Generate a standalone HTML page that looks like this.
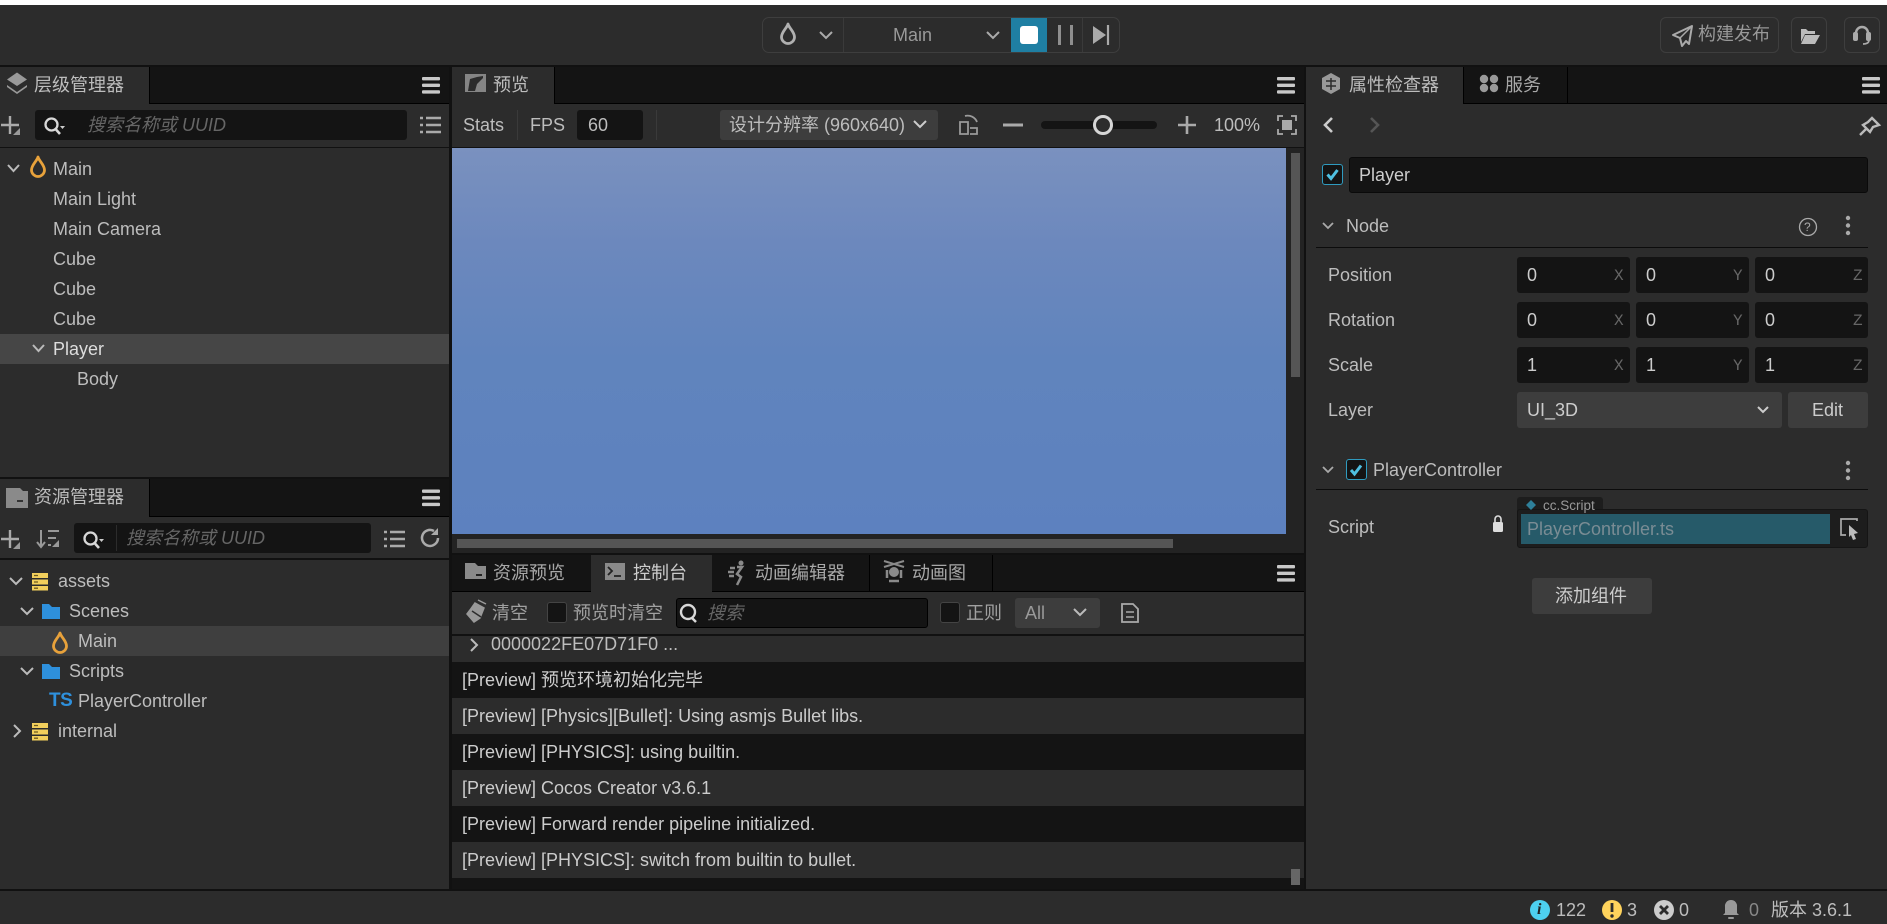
<!DOCTYPE html>
<html><head><meta charset="utf-8"><title>Cocos Creator</title>
<style>
html,body{margin:0;padding:0;background:#2c2c2c;}
#a{position:relative;width:1887px;height:924px;overflow:hidden;background:#2c2c2c;font-family:"Liberation Sans","Noto Sans CJK SC",sans-serif;font-size:18px;color:#bdbdbd;}
.b{position:absolute;box-sizing:border-box;}
.t{position:absolute;white-space:nowrap;line-height:30px;height:30px;}
.d{background:#141414;}
.i{background:#141414;border-radius:3px;}
.p{font-style:italic;color:#666;}
.ax{font-family:"Liberation Mono","DejaVu Sans Mono",monospace;font-size:16px;color:#666;}
svg{position:absolute;left:0;top:0;}
</style></head><body><div id="a">
<!-- top white -->
<div class="b" style="left:0;top:0;width:1887px;height:5px;background:#fff"></div>
<!-- panel frame lines -->
<div class="b" style="left:0;top:65px;width:1887px;height:2px;background:#111"></div>
<div class="b" style="left:449px;top:66px;width:3px;height:825px;background:#111"></div>
<div class="b" style="left:1304px;top:66px;width:2px;height:825px;background:#111"></div>
<div class="b" style="left:0;top:889px;width:1887px;height:2px;background:#111"></div>
<!-- left tabs -->
<div class="b d" style="left:149px;top:67px;width:300px;height:37px;border-left:1px solid #000;border-bottom:1px solid #000"></div>
<div class="b" style="left:0;top:147px;width:449px;height:1px;background:#111"></div>
<div class="b" style="left:0;top:477px;width:449px;height:2px;background:#111"></div>
<div class="b d" style="left:149px;top:479px;width:300px;height:38px;border-left:1px solid #000;border-bottom:1px solid #000"></div>
<div class="b" style="left:0;top:558px;width:449px;height:2px;background:#111"></div>
<div class="b" style="left:0;top:334px;width:449px;height:30px;background:#464646"></div>
<div class="b" style="left:0;top:626px;width:449px;height:30px;background:#3f3f3f"></div>
<div class="b i" style="left:35px;top:110px;width:372px;height:30px"></div>
<div class="b i" style="left:74px;top:523px;width:297px;height:30px"></div>
<div class="b" style="left:116px;top:525px;width:1px;height:26px;background:#2c2c2c"></div>
<!-- middle -->
<div class="b d" style="left:554px;top:67px;width:750px;height:37px;border-left:1px solid #000;border-bottom:1px solid #000"></div>
<div class="b" style="left:452px;top:147px;width:852px;height:1px;background:#111"></div>
<div class="b" style="left:517px;top:110px;width:1px;height:30px;background:#3a3a3a"></div>
<div class="b" style="left:656px;top:110px;width:1px;height:30px;background:#3a3a3a"></div>
<div class="b i" style="left:577px;top:110px;width:66px;height:30px"></div>
<div class="b" style="left:720px;top:110px;width:218px;height:30px;background:#3d3d3d;border-radius:3px"></div>
<div class="b" style="left:1041px;top:121px;width:116px;height:8px;background:#141414;border-radius:4px"></div>
<div class="b" style="left:1093px;top:115px;width:20px;height:20px;border:3px solid #d6d6d6;border-radius:50%;background:#2c2c2c"></div>
<div class="b" style="left:452px;top:148px;width:852px;height:405px;background:#232323"></div>
<div class="b" style="left:452px;top:148px;width:834px;height:386px;background:linear-gradient(180deg,#7a91bf 0%,#6c88bd 25%,#6084bd 55%,#5d81bf 100%)"></div>
<div class="b" style="left:1291px;top:153px;width:9px;height:224px;background:#555;"></div>
<div class="b" style="left:457px;top:539px;width:716px;height:9px;background:#555;"></div>
<div class="b" style="left:450px;top:553px;width:854px;height:2px;background:#111"></div>
<div class="b d" style="left:452px;top:555px;width:852px;height:37px;border-bottom:1px solid #000"></div>
<div class="b" style="left:591px;top:555px;width:121px;height:38px;background:#2c2c2c"></div>
<div class="b" style="left:869px;top:555px;width:1px;height:37px;background:#000"></div>
<div class="b" style="left:992px;top:555px;width:1px;height:37px;background:#000"></div>
<div class="b" style="left:452px;top:634px;width:852px;height:2px;background:#111"></div>
<div class="b" style="left:547px;top:602px;width:20px;height:21px;background:#141414;border:1px solid #444;border-radius:3px"></div>
<div class="b i" style="left:676px;top:598px;width:252px;height:30px;border:1px solid #000"></div>
<div class="b" style="left:940px;top:602px;width:20px;height:21px;background:#141414;border:1px solid #444;border-radius:3px"></div>
<div class="b" style="left:1015px;top:598px;width:85px;height:30px;background:#3d3d3d;border-radius:3px"></div>
<!-- console rows -->
<div class="b d" style="left:452px;top:662px;width:852px;height:36px"></div>
<div class="b d" style="left:452px;top:734px;width:852px;height:36px"></div>
<div class="b d" style="left:452px;top:806px;width:852px;height:36px"></div>
<div class="b d" style="left:452px;top:878px;width:852px;height:11px"></div>
<div class="b" style="left:1291px;top:869px;width:9px;height:16px;background:#666"></div>
<!-- right -->
<div class="b d" style="left:1463px;top:67px;width:424px;height:37px;border-left:1px solid #000;border-bottom:1px solid #000"></div>
<div class="b" style="left:1567px;top:67px;width:1px;height:37px;background:#000"></div>
<div class="b i" style="left:1349px;top:157px;width:519px;height:36px;border:1px solid #0a0a0a"></div>
<div class="b" style="left:1322px;top:164px;width:21px;height:21px;background:#141414;border:1px solid #2f9bbf;border-radius:3px"></div>
<div class="b" style="left:1316px;top:247px;width:552px;height:1px;background:#0c0c0c"></div>
<div class="b i" style="left:1517px;top:257px;width:113px;height:36px"></div><div class="b i" style="left:1636px;top:257px;width:113px;height:36px"></div><div class="b i" style="left:1755px;top:257px;width:113px;height:36px"></div>
<div class="b i" style="left:1517px;top:302px;width:113px;height:36px"></div><div class="b i" style="left:1636px;top:302px;width:113px;height:36px"></div><div class="b i" style="left:1755px;top:302px;width:113px;height:36px"></div>
<div class="b i" style="left:1517px;top:347px;width:113px;height:36px"></div><div class="b i" style="left:1636px;top:347px;width:113px;height:36px"></div><div class="b i" style="left:1755px;top:347px;width:113px;height:36px"></div>
<div class="b" style="left:1517px;top:392px;width:265px;height:36px;background:#3d3d3d;border-radius:3px"></div>
<div class="b" style="left:1788px;top:392px;width:80px;height:36px;background:#3d3d3d;border-radius:3px"></div>
<div class="b" style="left:1346px;top:459px;width:21px;height:21px;background:#141414;border:1px solid #2f9bbf;border-radius:3px"></div>
<div class="b" style="left:1316px;top:489px;width:552px;height:1px;background:#0c0c0c"></div>
<div class="b" style="left:1517px;top:497px;width:86px;height:20px;background:#1d1d1d;border-radius:3px 3px 0 0"></div>
<div class="b" style="left:1517px;top:509px;width:351px;height:39px;background:#1d1d1d;border-radius:3px;border:1px solid #151515"></div>
<div class="b" style="left:1521px;top:514px;width:309px;height:30px;background:#265a69"></div>
<div class="b" style="left:1532px;top:578px;width:120px;height:36px;background:#3d3d3d;border-radius:3px"></div>
<!-- top buttons -->
<div class="b" style="left:762px;top:17px;width:358px;height:36px;border:1px solid #3e3e3e;border-radius:7px"></div>
<div class="b" style="left:843px;top:18px;width:1px;height:34px;background:#3a3a3a"></div>
<div class="b" style="left:1011px;top:18px;width:36px;height:34px;background:#1f7fa3"></div>
<div class="b" style="left:1020px;top:26px;width:18px;height:18px;background:#fff;border-radius:3px"></div>
<div class="b" style="left:1082px;top:18px;width:1px;height:34px;background:#3a3a3a"></div>
<div class="b" style="left:1660px;top:17px;width:119px;height:36px;border:1px solid #3e3e3e;border-radius:6px"></div>
<div class="b" style="left:1791px;top:17px;width:36px;height:36px;border:1px solid #3e3e3e;border-radius:6px"></div>
<div class="b" style="left:1844px;top:17px;width:36px;height:36px;border:1px solid #3e3e3e;border-radius:6px"></div>

<svg width="1887" height="924" viewBox="0 0 1887 924" fill="none">
<defs>
<g id="h"><rect x="0" y="0" width="18" height="3.4" rx="1" fill="#c8c8c8"/><rect x="0" y="6.6" width="18" height="3.4" rx="1" fill="#c8c8c8"/><rect x="0" y="13.2" width="18" height="3.4" rx="1" fill="#c8c8c8"/></g>
<g id="fl"><path d="M0 -11 C1 -7 6.500 -3 6.500 2 C6.500 6 3 8.500 0 8.500 C-3 8.500 -6.500 6 -6.500 2 C-6.500 -3 -1 -7 0 -11 Z" stroke-width="2.800" stroke-linejoin="round"/></g>
<g id="plus"><path d="M9 0V18M0 9H18" stroke="#aaa" stroke-width="2.400"/><path d="M19 12V19H12Z" fill="#999"/></g>
<g id="q"><circle cx="7.500" cy="7.500" r="6" stroke="#d8d8d8" stroke-width="2.300"/><path d="M11.500 12L16 17" stroke="#d8d8d8" stroke-width="2.600"/></g>
<g id="ls"><path d="M6 1H21M6 8H21M6 15H21" stroke="#aaa" stroke-width="2.500"/><path d="M0 1H3M0 8H3M0 15H3" stroke="#aaa" stroke-width="2.500"/></g>
<g id="db"><path d="M0 0H16V5H0ZM0 6.500H16V11.500H0ZM0 13H16V17.500H0Z" fill="#f2cf5c"/><path d="M2 2.500H6M2 9H6M2 15.200H6" stroke="#6b5a20" stroke-width="1.300"/></g>
<g id="fo"><path d="M0 0H7L10 3H18V15H0Z" fill="#2e90dc"/></g>
<g id="ck"><path d="M-5 0L-1.500 4L5 -4.500" stroke="#4fbfe0" stroke-width="3"/></g>
<g id="dots"><circle cx="0" cy="0" r="2.200" fill="#aaa"/><circle cx="0" cy="7.500" r="2.200" fill="#aaa"/><circle cx="0" cy="15" r="2.200" fill="#aaa"/></g>
</defs>
<!-- hamburgers -->
<use href="#h" x="422" y="77"/><use href="#h" x="422" y="489.500"/>
<use href="#h" x="1277" y="77"/><use href="#h" x="1277" y="565"/><use href="#h" x="1862" y="77"/>
<!-- layers icon -->
<path d="M17 72.500L27 79.500L17 86L7 79.500Z" fill="#999"/><path d="M7 85L17 92L27 85L27 87L17 94L7 87Z" fill="#999"/>
<use href="#plus" x="1" y="116"/>
<use href="#q" x="44" y="117"/><path d="M60 126H65L62.500 129Z" fill="#ccc"/>
<use href="#ls" x="420" y="117"/>
<!-- hierarchy tree -->
<path d="M8 165L13.500 171L19 165" stroke="#bbb" stroke-width="2"/>
<use href="#fl" x="38" y="168" stroke="#e8a23b"/>
<path d="M33 345L38.500 351L44 345" stroke="#bbb" stroke-width="2"/>
<!-- asset panel -->
<path d="M6 488H20L23 491H28V508H6Z" fill="#8a8a8a"/><path d="M17 501H23" stroke="#333" stroke-width="2"/>
<use href="#plus" x="1" y="530"/>
<path d="M41 530V547M37 542L41 547L45 542M48 531H59M48 538H56M48 545H51" stroke="#999" stroke-width="2"/><path d="M59 540V547H52Z" fill="#999"/>
<use href="#q" x="83" y="531"/><path d="M99 539H104L101.500 542Z" fill="#ccc"/>
<use href="#ls" x="384" y="531"/>
<path d="M438 538A8 8 0 1 1 434 531" stroke="#aaa" stroke-width="2.500"/><path d="M438 528V535H431Z" fill="#aaa"/>
<path d="M10 578L16 584L22 578" stroke="#bbb" stroke-width="2"/><use href="#db" x="32" y="573"/>
<path d="M21 608L27 614L33 608" stroke="#bbb" stroke-width="2"/><use href="#fo" x="42" y="604"/>
<use href="#fl" x="60" y="644" stroke="#e8a23b"/>
<path d="M21 668L27 674L33 668" stroke="#bbb" stroke-width="2"/><use href="#fo" x="42" y="664"/>
<path d="M14 725L20 731L14 737" stroke="#bbb" stroke-width="2"/><use href="#db" x="32" y="723"/>
<!-- top toolbar -->
<use href="#fl" x="788" y="35" stroke="#b0b0b0"/>
<path d="M820 32L826 38L832 32" stroke="#aaa" stroke-width="2"/>
<path d="M987 32L993 38L999 32" stroke="#aaa" stroke-width="2"/>
<path d="M1059.500 25V45M1071.500 25V45" stroke="#8f8f8f" stroke-width="3"/>
<path d="M1093 26L1106 35L1093 44Z" fill="#aaa"/><path d="M1108 25V45" stroke="#aaa" stroke-width="2.200"/>
<path d="M1692 26L1673 35L1680 38L1682 46L1686 41L1689 44Z" stroke="#aaa" stroke-width="2" stroke-linejoin="round"/><path d="M1680 38L1692 26" stroke="#aaa" stroke-width="1.500"/>
<path d="M1801 29H1806L1808 31H1815V34H1805L1801 42Z" fill="#bbb"/><path d="M1805 35H1820L1815 44H1801Z" fill="#bbb"/>
<path d="M1856 37V33A6 6 0 0 1 1868 33V37" stroke="#aaa" stroke-width="2.400"/><rect x="1853" y="32" width="5" height="9" rx="2" fill="#aaa"/><rect x="1866" y="32" width="5" height="9" rx="2" fill="#aaa"/><path d="M1869 41Q1868 44 1863 44" stroke="#aaa" stroke-width="1.800"/>
<!-- preview toolbar -->
<rect x="465" y="74" width="21" height="18" fill="#858585"/><path d="M468 91L470 79L477 77L483 76V78L477 84L475 91Z" fill="#2c2c2c"/>
<path d="M960 122H968V134H960ZM965 116A10 10 0 0 1 977 122M970 128H977V134H970" stroke="#9a9a9a" stroke-width="1.800"/>
<path d="M1003 125H1023" stroke="#aaa" stroke-width="3"/>
<path d="M1178 125H1196M1187 116V134" stroke="#aaa" stroke-width="2.600"/>
<path d="M1278 121V116H1283M1291 116H1296V121M1296 129V134H1291M1283 134H1278V129" stroke="#aaa" stroke-width="1.800"/><rect x="1282" y="120" width="10" height="10" fill="#aaa"/>
<path d="M914 121L920 127L926 121" stroke="#ccc" stroke-width="2"/>
<!-- lower tabs -->
<path d="M465 563H475L478 566H486V579H465Z" fill="#8a8a8a"/><path d="M476 575H482" stroke="#222" stroke-width="2"/>
<rect x="605" y="563" width="20" height="17" fill="#8a8a8a"/><path d="M608 567L612 571L608 575M614 576H621" stroke="#222" stroke-width="1.800"/>
<circle cx="741" cy="563" r="2.500" fill="#8a8a8a"/><path d="M737 567L742 567L737 574L741 577L737 585M730 568H735M728 572H734M729 576H734" stroke="#8a8a8a" stroke-width="2.500"/>
<path d="M884 561L904 567M904 561L884 567" stroke="#8a8a8a" stroke-width="2"/><circle cx="894" cy="572" r="5" fill="#8a8a8a"/><path d="M887 570V578M901 570V578M889 581H899" stroke="#8a8a8a" stroke-width="2.500"/>
<!-- console toolbar -->
<path d="M475 603L484 608L480 618L474 622L467 614L470 610ZM478 600L486 604" fill="#999" stroke="#999" stroke-width="1.500"/><path d="M472 611L481 617" stroke="#2c2c2c" stroke-width="1.500"/>
<circle cx="688" cy="612" r="7" stroke="#d8d8d8" stroke-width="2.400"/><path d="M692 618L696 622" stroke="#d8d8d8" stroke-width="2.500"/>
<path d="M1074 609L1080 615L1086 609" stroke="#bbb" stroke-width="2"/>
<path d="M1122 604H1133L1138 609V622H1122Z" stroke="#aaa" stroke-width="1.800"/><path d="M1126 612H1134M1126 617H1134" stroke="#aaa" stroke-width="1.600"/>
<path d="M471 639L477 645L471 651" stroke="#bbb" stroke-width="2"/>
<!-- right panel icons -->
<path d="M1331 73L1340 78V89L1331 94L1322 89V78Z" fill="#999"/><path d="M1326 81H1336M1326 86H1336M1331 78V90" stroke="#2c2c2c" stroke-width="1.500"/>
<circle cx="1484" cy="79" r="4.200" fill="#999"/><circle cx="1494" cy="79" r="4.200" fill="#999"/><circle cx="1484" cy="88" r="4.200" fill="#999"/><circle cx="1494" cy="88" r="4.200" fill="#999"/>
<path d="M1332 118L1325 125L1332 132" stroke="#ccc" stroke-width="2.600"/>
<path d="M1371 118L1378 125L1371 132" stroke="#555" stroke-width="2.600"/>
<path d="M1872 118L1879 125L1873 127L1870 132L1863 125L1868 122ZM1866 129L1860 135" stroke="#bbb" stroke-width="2.400"/>
<use href="#ck" x="1332.500" y="174.500"/>
<path d="M1323 223L1328 228L1333 223" stroke="#aaa" stroke-width="1.800"/>
<circle cx="1808" cy="227" r="8.500" stroke="#aaa" stroke-width="1.300"/>
<use href="#dots" x="1848" y="218"/>
<path d="M1758 407L1763 412L1768 407" stroke="#ccc" stroke-width="2"/>
<path d="M1323 467L1328 472L1333 467" stroke="#aaa" stroke-width="1.800"/>
<use href="#ck" x="1356" y="470"/>
<use href="#dots" x="1848" y="463"/>
<path d="M1531 500L1536 505L1531 510L1526 505Z" fill="#2e7f99"/>
<path d="M1495 522V519A3 3 0 0 1 1501 519V522" stroke="#ddd" stroke-width="1.600"/><rect x="1493" y="522" width="10" height="10" rx="1.500" fill="#ddd"/>
<path d="M1857 521V519H1841V535H1846" stroke="#aaa" stroke-width="1.700"/><path d="M1849 525L1858 533L1854 534L1856 539L1853 540L1851 535L1849 537Z" fill="#bbb"/>
<!-- status -->
<circle cx="1540" cy="910" r="10" fill="#4dd0f0"/>
<circle cx="1612" cy="910" r="10" fill="#ffd35c"/><path d="M1612 903V912" stroke="#2c2c2c" stroke-width="2.800"/><circle cx="1612" cy="916" r="1.700" fill="#2c2c2c"/>
<circle cx="1664" cy="910" r="10" fill="#ccc"/><path d="M1660 906L1668 914M1668 906L1660 914" stroke="#2c2c2c" stroke-width="2.800"/>
<path d="M1731 900A6 6 0 0 1 1737 907V913L1739 915H1723L1725 913V907A6 6 0 0 1 1731 900Z" fill="#999"/><rect x="1728" y="917" width="6" height="2" rx="1" fill="#999"/>
</svg>

<!-- text -->
<div class="t" style="left:34px;top:70px">层级管理器</div>
<div class="t p" style="left:87px;top:110px">搜索名称或 UUID</div>
<div class="t" style="left:53px;top:154px">Main</div>
<div class="t" style="left:53px;top:184px">Main Light</div>
<div class="t" style="left:53px;top:214px">Main Camera</div>
<div class="t" style="left:53px;top:244px">Cube</div>
<div class="t" style="left:53px;top:274px">Cube</div>
<div class="t" style="left:53px;top:304px">Cube</div>
<div class="t" style="left:53px;top:334px;color:#ddd">Player</div>
<div class="t" style="left:77px;top:364px">Body</div>
<div class="t" style="left:34px;top:482px">资源管理器</div>
<div class="t p" style="left:126px;top:523px">搜索名称或 UUID</div>
<div class="t" style="left:58px;top:566px">assets</div>
<div class="t" style="left:69px;top:596px">Scenes</div>
<div class="t" style="left:78px;top:626px">Main</div>
<div class="t" style="left:69px;top:656px">Scripts</div>
<div class="t" style="left:49px;top:686px;color:#2e90dc;font-weight:bold;font-size:19px;letter-spacing:-.5px">TS</div>
<div class="t" style="left:78px;top:686px">PlayerController</div>
<div class="t" style="left:58px;top:716px">internal</div>
<div class="t" style="left:893px;top:20px;color:#999">Main</div>
<div class="t" style="left:1698px;top:19px;color:#999">构建发布</div>
<div class="t" style="left:493px;top:70px">预览</div>
<div class="t" style="left:463px;top:110px">Stats</div>
<div class="t" style="left:530px;top:110px">FPS</div>
<div class="t" style="left:588px;top:110px">60</div>
<div class="t" style="left:729px;top:110px">设计分辨率 (960x640)</div>
<div class="t" style="left:1214px;top:110px">100%</div>
<div class="t" style="left:493px;top:558px;color:#a8a8a8">资源预览</div>
<div class="t" style="left:633px;top:558px;color:#ccc">控制台</div>
<div class="t" style="left:755px;top:558px;color:#a8a8a8">动画编辑器</div>
<div class="t" style="left:912px;top:558px;color:#a8a8a8">动画图</div>
<div class="t" style="left:492px;top:598px;color:#a0a0a0">清空</div>
<div class="t" style="left:573px;top:598px;color:#a0a0a0">预览时清空</div>
<div class="t p" style="left:707px;top:598px">搜索</div>
<div class="t" style="left:966px;top:598px;color:#a0a0a0">正则</div>
<div class="t" style="left:1025px;top:598px;color:#999">All</div>
<div class="t" style="left:491px;top:629px">0000022FE07D71F0 ...</div>
<div class="t" style="left:462px;top:665px;color:#ccc">[Preview] 预览环境初始化完毕</div>
<div class="t" style="left:462px;top:701px;color:#ccc">[Preview] [Physics][Bullet]: Using asmjs Bullet libs.</div>
<div class="t" style="left:462px;top:737px;color:#ccc">[Preview] [PHYSICS]: using builtin.</div>
<div class="t" style="left:462px;top:773px;color:#ccc">[Preview] Cocos Creator v3.6.1</div>
<div class="t" style="left:462px;top:809px;color:#ccc">[Preview] Forward render pipeline initialized.</div>
<div class="t" style="left:462px;top:845px;color:#ccc">[Preview] [PHYSICS]: switch from builtin to bullet.</div>
<div class="t" style="left:1349px;top:70px">属性检查器</div>
<div class="t" style="left:1505px;top:70px;color:#a8a8a8">服务</div>
<div class="t" style="left:1359px;top:160px;color:#ccc">Player</div>
<div class="t" style="left:1346px;top:211px">Node</div>
<div class="t" style="left:1804px;top:212px;font-size:12px;color:#aaa">?</div>
<div class="t" style="left:1328px;top:260px">Position</div>
<div class="t" style="left:1328px;top:305px">Rotation</div>
<div class="t" style="left:1328px;top:350px">Scale</div>
<div class="t" style="left:1328px;top:395px">Layer</div>
<div class="t" style="left:1328px;top:512px">Script</div>
<div class="t" style="left:1527px;top:260px;color:#ccc">0</div><div class="t ax" style="left:1614px;top:261px">X</div>
<div class="t" style="left:1646px;top:260px;color:#ccc">0</div><div class="t ax" style="left:1733px;top:261px">Y</div>
<div class="t" style="left:1765px;top:260px;color:#ccc">0</div><div class="t ax" style="left:1853px;top:261px">Z</div>
<div class="t" style="left:1527px;top:305px;color:#ccc">0</div><div class="t ax" style="left:1614px;top:306px">X</div>
<div class="t" style="left:1646px;top:305px;color:#ccc">0</div><div class="t ax" style="left:1733px;top:306px">Y</div>
<div class="t" style="left:1765px;top:305px;color:#ccc">0</div><div class="t ax" style="left:1853px;top:306px">Z</div>
<div class="t" style="left:1527px;top:350px;color:#ccc">1</div><div class="t ax" style="left:1614px;top:351px">X</div>
<div class="t" style="left:1646px;top:350px;color:#ccc">1</div><div class="t ax" style="left:1733px;top:351px">Y</div>
<div class="t" style="left:1765px;top:350px;color:#ccc">1</div><div class="t ax" style="left:1853px;top:351px">Z</div>
<div class="t" style="left:1527px;top:395px;color:#ccc">UI_3D</div>
<div class="t" style="left:1812px;top:395px;color:#ccc">Edit</div>
<div class="t" style="left:1373px;top:455px">PlayerController</div>
<div class="t" style="left:1543px;top:491px;font-size:13.5px;color:#999">cc.Script</div>
<div class="t" style="left:1527px;top:514px;color:#7a8c94">PlayerController.ts</div>
<div class="t" style="left:1555px;top:581px;color:#ccc">添加组件</div>
<div class="t" style="left:1537px;top:895px;color:#222;font:italic bold 16px/30px 'Liberation Serif',serif;">i</div>
<div class="t" style="left:1556px;top:895px">122</div>
<div class="t" style="left:1627px;top:895px">3</div>
<div class="t" style="left:1679px;top:895px">0</div>
<div class="t" style="left:1749px;top:895px;color:#888">0</div>
<div class="t" style="left:1771px;top:895px">版本 3.6.1</div>
</div></body></html>
